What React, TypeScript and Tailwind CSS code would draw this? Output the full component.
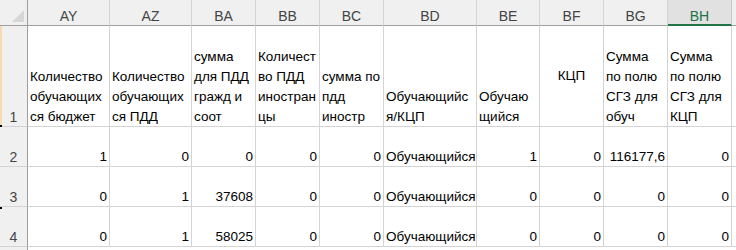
import React from "react";

const cols = ["AY", "AZ", "BA", "BB", "BC", "BD", "BE", "BF", "BG", "BH"];

const head: { lines: string[]; center?: boolean }[] = [
  { lines: ["Количество", "обучающих", "ся бюджет"] },
  { lines: ["Количество", "обучающих", "ся ПДД"] },
  { lines: ["сумма", "для ПДД", "гражд и", "соот"] },
  { lines: ["Количест", "во ПДД", "иностран", "цы"] },
  { lines: ["сумма по", "пдд", "иностр"] },
  { lines: ["Обучающийс", "я/КЦП"] },
  { lines: ["Обучаю", "щийся"] },
  { lines: ["КЦП"], center: true },
  { lines: ["Сумма", "по полю", "СГЗ для", "обуч"] },
  { lines: ["Сумма", "по полю", "СГЗ для", "КЦП"] },
];

const data: string[][] = [
  ["1", "0", "0", "0", "0", "Обучающийся", "1", "0", "116177,6", "0"],
  ["0", "1", "37608", "0", "0", "Обучающийся", "0", "0", "0", "0"],
  ["0", "1", "58025", "0", "0", "Обучающийся", "0", "0", "0", "0"],
];

const font = { fontFamily: '"Liberation Sans", Arial, sans-serif' };

export default function App() {
  return (
    <div className="relative w-[736px] h-[250px] overflow-hidden bg-white text-[13.5px] text-black" style={font}>
      <div className="grid grid-cols-[28px_82px_82px_64px_64px_64px_93px_63px_64px_64px_64px_1fr] grid-rows-[26px_101px_40px_40px_40px_1fr] h-full">
        <div className="bg-[#f0f0f0] border-r border-b border-[#9e9e9e] relative">
          <svg className="absolute right-[3px] bottom-[3px]" width="12" height="12" viewBox="0 0 12 12">
            <polygon points="12,0 12,12 0,12" fill="#d6d6d6" />
          </svg>
        </div>
        {cols.map((c, i) => (
          <div
            key={c}
            className={
              i === 9
                ? "bg-[#e1e1e1] border-r border-[#c9c9c9] border-b-2 border-b-[#217346] text-[#217346] flex items-center justify-center pt-[8px] text-[14px]"
                : "bg-[#f0f0f0] border-r border-[#d4d4d4] border-b border-b-[#9e9e9e] text-[#444] flex items-center justify-center pt-[8px] text-[14px]"
            }
          >
            {c}
          </div>
        ))}
        <div className="bg-[#f0f0f0] border-b border-[#9e9e9e]" />

        <div className="bg-[#f0f0f0] border-r border-[#9e9e9e] border-b border-b-[#d4d4d4] flex items-end justify-center text-[#444] text-[14px] leading-[20px] relative">
          <div className="absolute left-0 top-0 bottom-0 w-[2px] bg-[#f7dcb2]" />
          <span className="translate-y-[1px]">1</span>
        </div>
        {head.map((h, i) => (
          <div
            key={i}
            className={
              "border-r border-b border-[#d4d4d4] pl-[2px] pr-[2px] flex flex-col leading-[20px] whitespace-nowrap overflow-visible " +
              (h.center ? "justify-center items-center" : "justify-end")
            }
          >
            {h.lines.map((l, j) => (
              <div key={j} className={h.center ? "" : "translate-y-[1px]"}>
                {l}
              </div>
            ))}
          </div>
        ))}
        <div className="border-b border-[#d4d4d4]" />

        {data.map((r, ri) => (
          <React.Fragment key={ri}>
            <div className="bg-[#f0f0f0] border-r border-[#9e9e9e] border-b border-b-[#d4d4d4] flex items-end justify-center text-[#444] text-[14px] leading-[20px]">
              <span className="translate-y-[1px]">{ri + 2}</span>
            </div>
            {r.map((v, ci) => (
              <div
                key={ci}
                className={
                  "border-r border-b border-[#d4d4d4] flex items-end leading-[20px] whitespace-nowrap " +
                  (ci === 5 ? "justify-start pl-[2px]" : "justify-end pr-[2px]")
                }
              >
                <span className="translate-y-[1px]">{v}</span>
              </div>
            ))}
            <div className="border-b border-[#d4d4d4]" />
          </React.Fragment>
        ))}
        <div className="bg-[#f0f0f0] border-r border-[#9e9e9e]" />
      </div>
      <div className="absolute left-0 top-[125px] w-[2px] h-[2px] bg-black" />
      <div className="absolute left-0 top-[207px] w-[2px] h-[2px] bg-black" />
    </div>
  );
}
